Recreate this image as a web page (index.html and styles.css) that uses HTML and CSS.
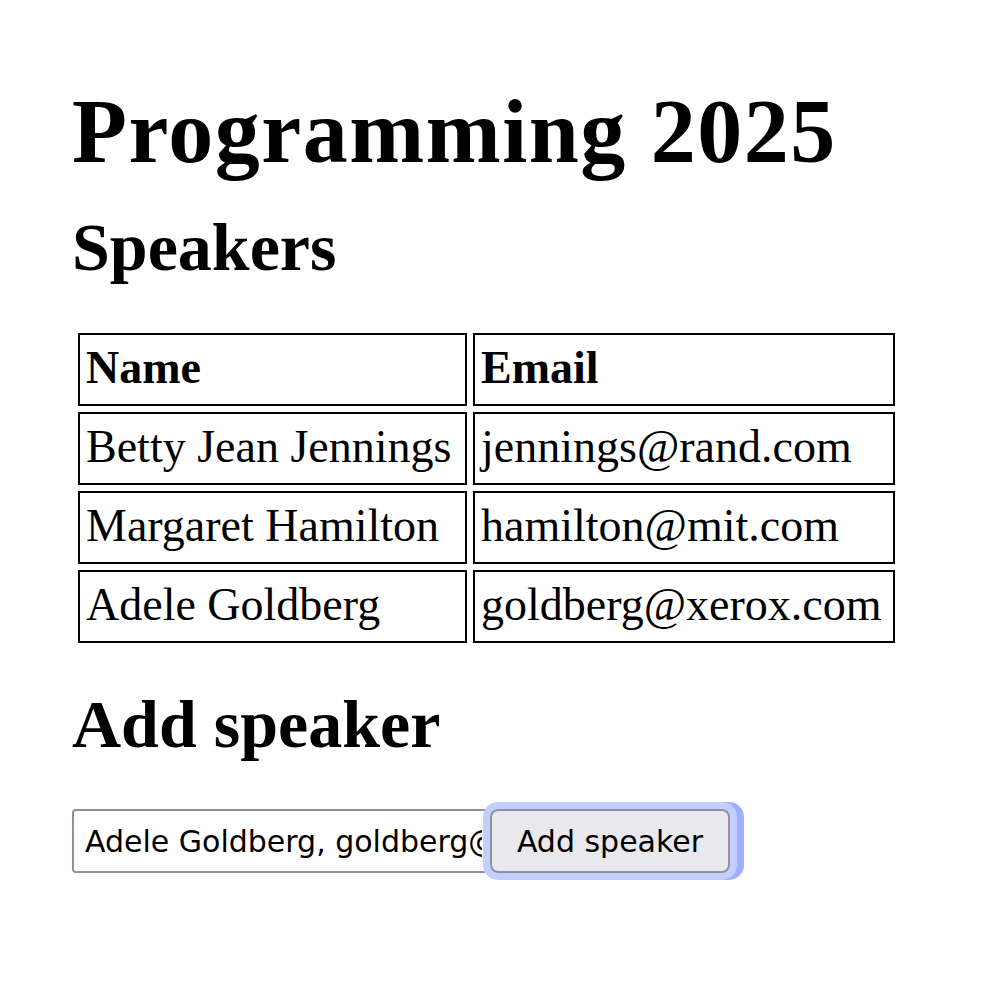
FILE: index.html
```html
<!DOCTYPE html>
<html lang="en">
<head>
<meta charset="utf-8">
<title>Programming 2025</title>
<link rel="stylesheet" href="styles.css">
</head>
<body>
<main class="page">
  <h1 class="title">Programming 2025</h1>
  <h2 class="section">Speakers</h2>
  <table class="speakers">
    <thead>
      <tr><th class="col-name">Name</th><th class="col-email">Email</th></tr>
    </thead>
    <tbody>
      <tr><td>Betty Jean Jennings</td><td>jennings@rand.com</td></tr>
      <tr><td>Margaret Hamilton</td><td>hamilton@mit.com</td></tr>
      <tr><td>Adele Goldberg</td><td>goldberg@xerox.com</td></tr>
    </tbody>
  </table>
  <h2 class="section section-add">Add speaker</h2>
  <form class="add-form">
    <input class="add-input" type="text" value="Adele Goldberg, goldberg@xerox.com">
    <button class="add-button" type="button">Add speaker</button>
  </form>
</main>
</body>
</html>
```
FILE: styles.css
```css
html, body {
  margin: 0;
  padding: 0;
  background: #ffffff;
  color: #000000;
}

.page {
  padding: 87px 0 120px 72px;
  font-family: "Liberation Serif", "Times New Roman", serif;
}

.title {
  margin: 0;
  font-size: 90px;
  line-height: 90px;
  font-weight: 700;
  letter-spacing: 1.5px;
}

.section {
  margin: 36px 0 0;
  font-size: 68px;
  line-height: 68px;
  font-weight: 700;
}

.section-add {
  margin-top: 41px;
}

.speakers {
  margin-top: 46px;
  border-collapse: separate;
  border-spacing: 6px;
  table-layout: fixed;
  width: 829px;
  font-size: 46px;
  line-height: 57px;
}

.speakers th,
.speakers td {
  box-sizing: border-box;
  border: 2px solid #000000;
  padding: 4px 6px 8px;
  text-align: left;
  white-space: nowrap;
  overflow: hidden;
}

.speakers th {
  font-weight: 700;
}

.col-name {
  width: 389px;
}

.col-email {
  width: 422px;
}

.add-form {
  margin: 51px 0 0;
  display: flex;
  align-items: center;
}

.add-input {
  box-sizing: border-box;
  width: 416px;
  height: 64px;
  margin: 0;
  padding: 0 4px 0 11px;
  border: 2px solid #8f8f9d;
  border-radius: 4px;
  background: #ffffff;
  color: #000000;
  font-family: "DejaVu Sans", Verdana, sans-serif;
  font-size: 30px;
}

.add-button {
  box-sizing: border-box;
  width: 240px;
  height: 64px;
  margin: 0 0 0 2px;
  padding: 0;
  border: 2px solid #8f8f9d;
  border-radius: 8px;
  background: #e9e9ed;
  color: #000000;
  font-family: "DejaVu Sans", Verdana, sans-serif;
  font-size: 30px;
  outline: 7px solid #c2cfff;
  outline-offset: 0;
  box-shadow: 7px 0 0 7px #9eb0ff;
}
```
